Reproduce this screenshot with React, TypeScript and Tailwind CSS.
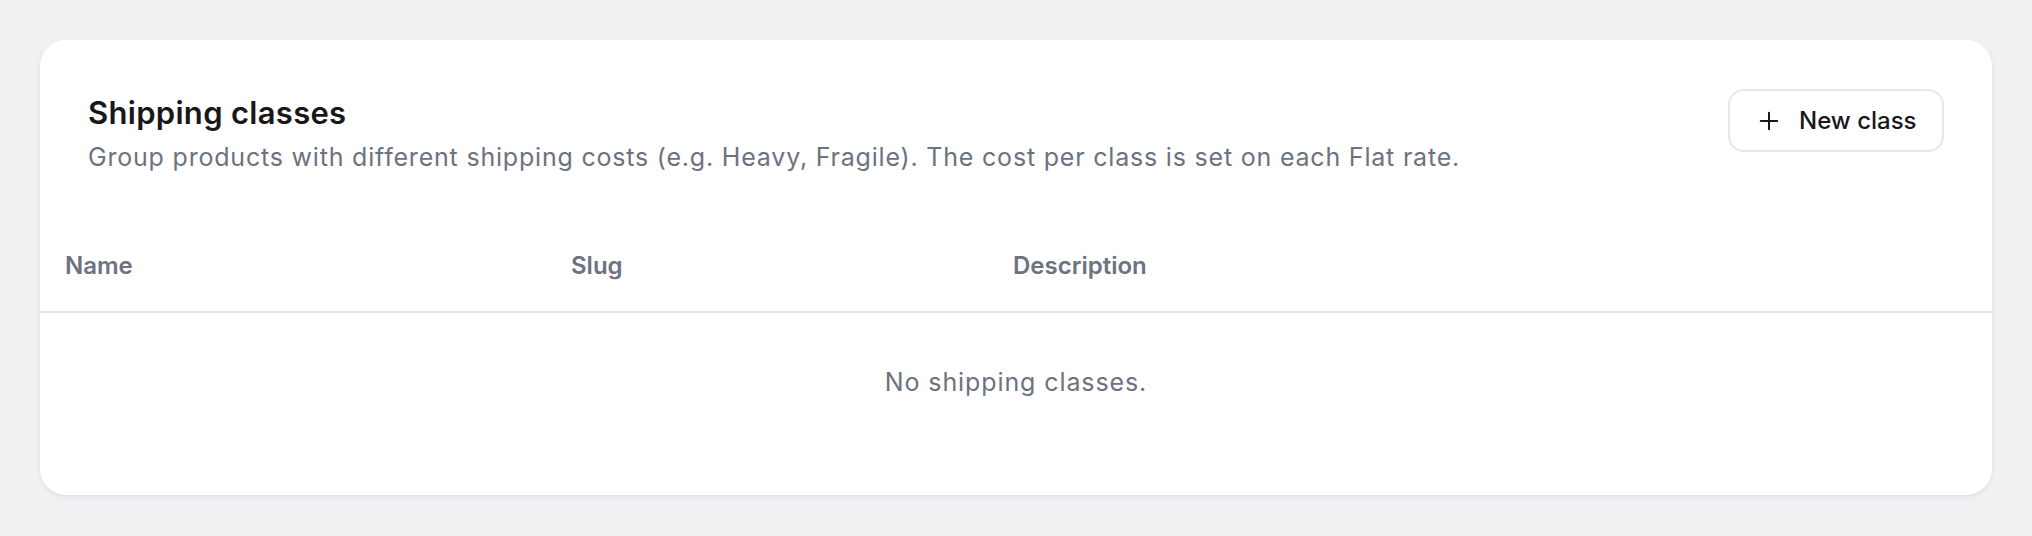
import React from 'react';

/**
 * Shipping classes settings card with an empty table state.
 */

const columns = [
  { key: 'name', label: 'Name', width: 'w-[506px]' },
  { key: 'slug', label: 'Slug', width: 'w-[442px]' },
  { key: 'description', label: 'Description', width: '' },
];

const PlusIcon: React.FC = () => (
  <svg width="22" height="22" viewBox="0 0 24 24" fill="none" stroke="currentColor" strokeWidth="2.2" strokeLinecap="round">
    <path d="M12 3v18" />
    <path d="M3 12h18" />
  </svg>
);

export default function App() {
  return (
    <div
      className="min-h-[536px] w-full bg-[#f0f1f3] p-[40px]"
      style={{ fontFamily: 'Inter, "Noto Sans", sans-serif' }}
    >
      <div className="overflow-hidden rounded-[26px] bg-white shadow-[0_2px_6px_rgba(16,24,40,0.06),0_1px_2px_rgba(16,24,40,0.04)]">
        {/* Header */}
        <div className="flex items-start justify-between px-[48px] pt-[48px]">
          <div className="pt-[7px]">
            <h2 className="text-[31px] font-semibold leading-[36px] tracking-[0.3px] text-[#18181b]">
              Shipping classes
            </h2>
            <p className="mt-[10px] text-[25px] leading-[32px] tracking-[0.8px] text-[#6b7280]">
              Group products with different shipping costs (e.g. Heavy, Fragile). The cost per class is set on each Flat rate.
            </p>
          </div>
          <button className="mt-[1px] flex h-[63px] w-[216px] items-center gap-[19px] rounded-[16px] border-2 border-[#e5e7eb] bg-white pl-[28px] text-[24px] font-medium text-[#18181b]">
            <PlusIcon />
            <span>New class</span>
          </button>
        </div>

        {/* Table */}
        <table className="mt-[48px] w-full border-collapse">
          <thead>
            <tr className="border-b-2 border-[#e5e7eb]">
              {columns.map((col) => (
                <th
                  key={col.key}
                  className={`${col.width} px-[25px] py-[29px] text-left text-[24px] font-semibold leading-[32px] text-[#6b7280]`}
                >
                  {col.label}
                </th>
              ))}
            </tr>
          </thead>
          <tbody>
            <tr>
              <td colSpan={3} className="pt-[53px] pb-[97px] text-center text-[25px] leading-[32px] tracking-[0.9px] text-[#6b7280]">
                No shipping classes.
              </td>
            </tr>
          </tbody>
        </table>
      </div>
    </div>
  );
}
